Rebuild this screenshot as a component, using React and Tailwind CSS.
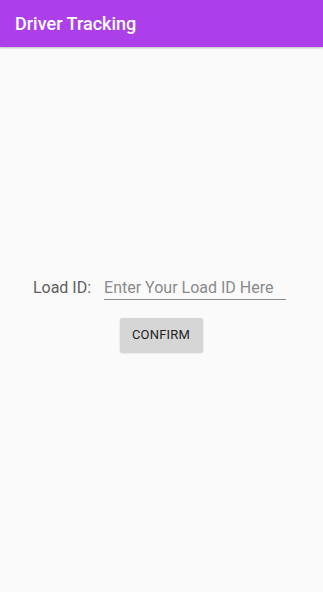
import React from "react";

export default function App() {
  return (
    <div
      className="w-[323px] h-[592px] bg-[#fafafa] flex flex-col"
      style={{ fontFamily: "Roboto, 'Liberation Sans', sans-serif" }}
    >
      {/* Toolbar */}
      <div className="h-[47px] bg-[#ad3fea] flex items-center px-[15px] shadow-[0_1px_2px_rgba(0,0,0,0.25)] shrink-0">
        <span className="text-white text-[18px] font-medium">Driver Tracking</span>
      </div>

      {/* Form */}
      <div className="flex flex-col items-center pt-[232px]">
        <div className="flex items-end mr-[4px]">
          <span className="text-[16px] leading-[17px] text-[#5f5f5f] pb-[4px] mr-[13px]">Load ID:</span>
          <input
            className="w-[182px] h-[21px] text-[16px] leading-[17px] text-[#333] placeholder-[#8a8a8a] bg-transparent border-b border-[#8a8a8a] outline-none px-0 pt-0 pb-[3px]"
            placeholder="Enter Your Load ID Here"
          />
        </div>
        <button className="mt-[18px] mr-[1px] w-[83px] h-[34px] bg-[#d6d6d6] rounded-[2px] shadow-[0_1px_2px_rgba(0,0,0,0.2)] text-[13px] font-normal text-[#1f1f1f] tracking-[0.2px]">
          CONFIRM
        </button>
      </div>
    </div>
  );
}
